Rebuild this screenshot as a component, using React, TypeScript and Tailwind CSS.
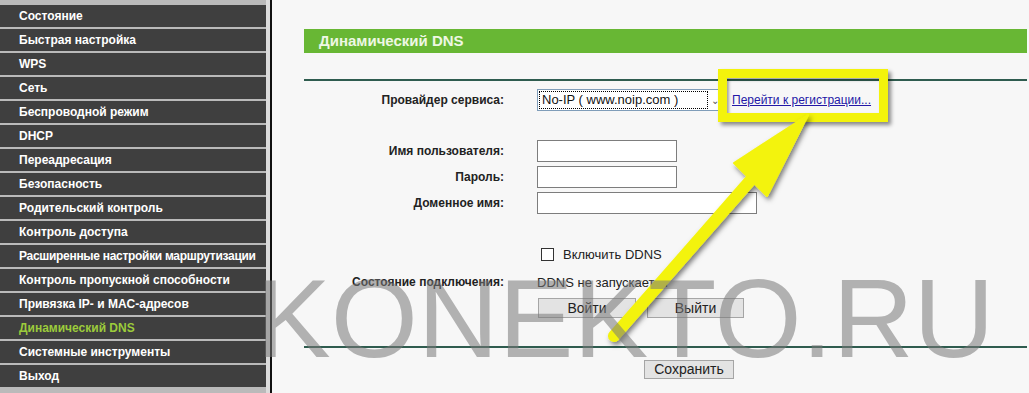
import { FC } from "react";

const menu = [
  "Состояние",
  "Быстрая настройка",
  "WPS",
  "Сеть",
  "Беспроводной режим",
  "DHCP",
  "Переадресация",
  "Безопасность",
  "Родительский контроль",
  "Контроль доступа",
  "Расширенные настройки маршрутизации",
  "Контроль пропускной способности",
  "Привязка IP- и MAC-адресов",
  "Динамический DNS",
  "Системные инструменты",
  "Выход",
];

const Sidebar: FC = () => (
  <aside className="flex h-full shrink-0">
    <div className="flex w-[266px] flex-col gap-[2px] bg-[#bababa] pt-[5px]">
      {menu.map((item) => (
        <div
          key={item}
          className={
            item === "Динамический DNS"
              ? "h-[22px] whitespace-nowrap bg-[#3f3f3f] pl-[19px] text-[12px] font-bold leading-[22px] text-[#9ccb3b]"
              : item.length > 32
                ? "h-[22px] whitespace-nowrap bg-[#3f3f3f] pl-[19px] text-[12px] font-bold leading-[22px] tracking-[-0.3px] text-white"
                : "h-[22px] whitespace-nowrap bg-[#3f3f3f] pl-[19px] text-[12px] font-bold leading-[22px] text-white"
          }
        >
          {item}
        </div>
      ))}
    </div>
    <div className="w-[4px] bg-[#dcdcdc]" />
    <div className="w-[2px] bg-[#111]" />
  </aside>
);

const Label: FC<{ text: string }> = ({ text }) => (
  <div className="w-[200px] shrink-0 text-right text-[12px] font-bold text-[#222]">{text}</div>
);

const Field: FC<{ label: string; width: string }> = ({ label, width }) => (
  <div className="flex items-center gap-[33px]">
    <Label text={label} />
    <div className={`h-[22px] border border-[#7d7d7d] bg-white ${width}`} />
  </div>
);

export default function App() {
  return (
    <div className="relative flex h-[393px] w-[1029px] overflow-hidden bg-[#f7f7f7] font-['Liberation_Sans',Arial,sans-serif]">
      <Sidebar />

      <main className="flex flex-1 flex-col pl-[32px] pr-[2px] pt-[29px]">
        <div className="h-[24px] bg-[#68b734] pl-[15px] text-[15px] font-bold leading-[24px] text-[#eef7e4]">
          Динамический DNS
        </div>
        <div className="mt-[26px] h-[2px] bg-[#2f5c4f]" />

        <div className="mt-[8px] flex items-center gap-[33px]">
          <Label text="Провайдер сервиса:" />
          <div className="flex h-[22px] w-[183px] items-center border border-[#7f9db9] bg-white">
            <div className="ml-[1px] flex h-[18px] w-[170px] items-center border border-dotted border-black pl-[2px] text-[13px] text-[#111]">
              No-IP ( www.noip.com )
            </div>
            <span className="ml-[3px] text-[10px] text-[#555]">⌄</span>
          </div>
          <a className="-ml-[21px] text-[12px] text-[#2317a6] underline">Перейти к регистрации...</a>
        </div>

        <div className="mt-[29px] flex flex-col gap-[4px]">
          <Field label="Имя пользователя:" width="w-[140px]" />
          <Field label="Пароль:" width="w-[140px]" />
          <Field label="Доменное имя:" width="w-[220px]" />
        </div>

        <div className="mt-[31px] flex items-center pl-[237px]">
          <div className="h-[13px] w-[13px] border border-[#333] bg-white" />
          <span className="ml-[9px] text-[13px] text-[#222]">Включить DDNS</span>
        </div>

        <div className="mt-[8px] flex items-center gap-[33px]">
          <Label text="Состояние подключения:" />
          <span className="text-[13px] text-[#222]">DDNS не запускается</span>
        </div>

        <div className="mt-[6px] flex gap-[11px] pl-[234px]">
          <button className="h-[20px] w-[98px] border border-[#a5a5a5] bg-[#e3e3e3] text-[14px] leading-[18px] text-[#222]">
            Войти
          </button>
          <button className="h-[20px] w-[97px] border border-[#a5a5a5] bg-[#e3e3e3] text-[14px] leading-[18px] text-[#222]">
            Выйти
          </button>
        </div>

        <div className="mt-[28px] h-[2px] bg-[#2f5c4f]" />

        <div className="mt-[9px] pl-[340px]">
          <button className="h-[19px] w-[90px] border border-[#a5a5a5] bg-[#e3e3e3] text-[14px] leading-[17px] text-[#222]">
            Сохранить
          </button>
        </div>
      </main>

      {/* highlight frame */}
      <div className="pointer-events-none absolute left-[718px] top-[69px] h-[53px] w-[170px] border-[9px] border-[#f3f30c] shadow-[3px_3px_4px_rgba(0,0,0,0.45),inset_2px_2px_3px_rgba(0,0,0,0.35)]" />

      {/* arrow */}
      <svg className="pointer-events-none absolute left-0 top-0" width="1029" height="393">
        <defs>
          <filter id="sh" x="-20%" y="-20%" width="140%" height="140%">
            <feDropShadow dx="2" dy="3" stdDeviation="2.5" floodColor="#000" floodOpacity="0.5" />
          </filter>
        </defs>
        <g filter="url(#sh)" fill="#f3f30c" stroke="#f3f30c">
          <line x1="614" y1="336" x2="756" y2="174" strokeWidth="12" strokeLinecap="round" />
          <polygon points="808,115 734,163 767,196" strokeWidth="2" strokeLinejoin="round" />
        </g>
      </svg>

      {/* watermark */}
      <div className="pointer-events-none absolute left-[256px] top-[263px] text-[112px] leading-none text-[rgba(120,120,120,0.55)]">
        KONEKTO.RU
      </div>
    </div>
  );
}
